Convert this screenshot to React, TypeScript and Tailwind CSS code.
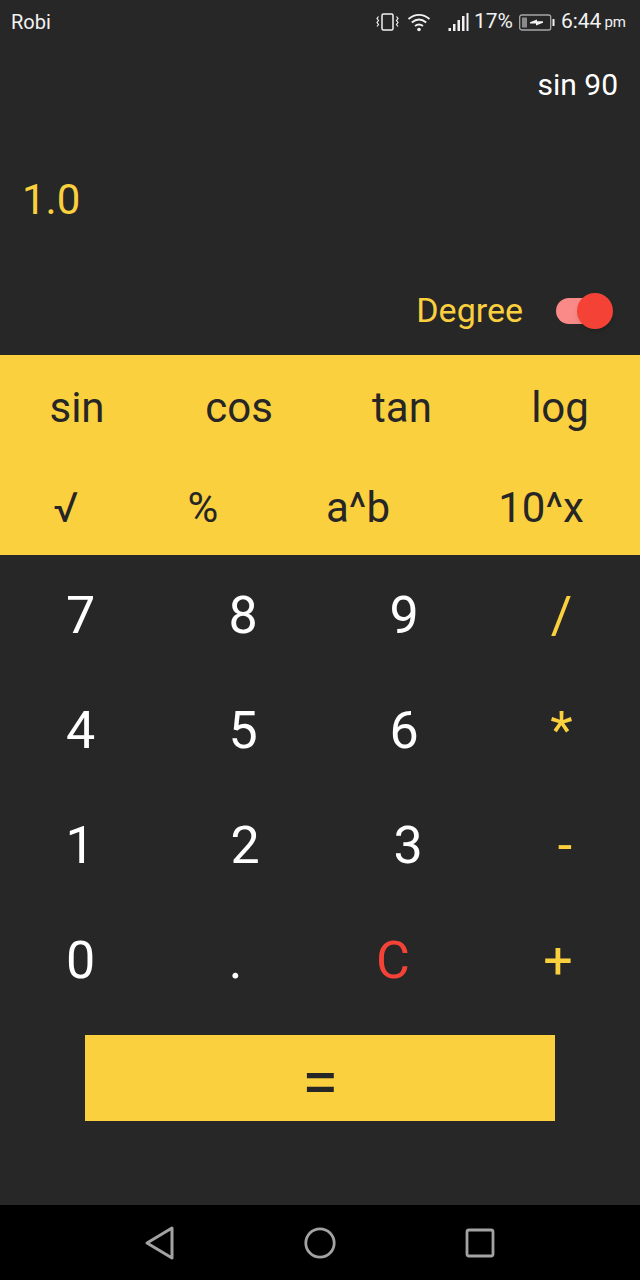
const font = { fontFamily: "Roboto, sans-serif" };

interface Cell {
  label: string;
  width: string;
  color?: string;
}

function Key({ label, width, color = "text-white" }: Cell) {
  return <button className={`${width} ${color} shrink-0 text-center text-[52px] leading-none`}>{label}</button>;
}

function StatusIcons() {
  return (
    <>
      <svg width="24" height="20" viewBox="0 0 24 20" fill="none" stroke="#f2f2f2" strokeWidth="1.5">
        <rect x="6" y="2" width="11" height="16" rx="1.5" />
        <path d="M2.5 4.5 1 6.5 2.5 8.5 1 10.5 2.5 12.5 1 14.5M20.5 4.5 22 6.5 20.5 8.5 22 10.5 20.5 12.5 22 14.5" strokeWidth="1.2" />
      </svg>
      <svg width="26" height="20" viewBox="0 0 26 20" fill="none" stroke="#f2f2f2" strokeWidth="1.8" className="ml-[6px]">
        <path d="M2.5 7C9 1.5 17 1.5 23.5 7M5.8 10.5C10.3 6.8 15.7 6.8 20.2 10.5M9 14c2.6-2 5.4-2 8 0" />
        <circle cx="13" cy="17.5" r="1.8" fill="#f2f2f2" stroke="none" />
      </svg>
      <svg width="22" height="20" viewBox="0 0 22 20" fill="#f2f2f2" className="ml-[16px]">
        <rect x="0.5" y="16" width="2.5" height="3" />
        <rect x="5" y="12" width="2.5" height="7" />
        <rect x="9.5" y="8" width="2.5" height="11" />
        <rect x="14" y="4" width="2.5" height="15" />
        <rect x="18.5" y="1" width="2" height="18" />
      </svg>
    </>
  );
}

function BatteryIcon() {
  return (
    <svg width="36" height="18" viewBox="0 0 36 18" fill="none" className="ml-[6px]">
      <rect x="0.7" y="2" width="31" height="15" rx="2" stroke="#a8a8a8" strokeWidth="1.3" />
      <rect x="3" y="4.5" width="5" height="10" fill="#8a8a8a" />
      <path d="M11 9.2 18 6.6V8.3H24V9.8L17 12.4V10.6H11Z" fill="#f2f2f2" />
      <rect x="33.5" y="6" width="2" height="7" rx="0.5" fill="#f2f2f2" />
    </svg>
  );
}

export default function App() {
  return (
    <div style={font} className="flex h-[1280px] w-[640px] flex-col overflow-hidden bg-[#272727]">
      {/* Status bar */}
      <div className="flex h-[44px] items-center pr-[14px] pl-[11px] text-[#f2f2f2]">
        <span className="text-[20px]">Robi</span>
        <div className="ml-auto flex items-center">
          <StatusIcons />
          <span className="ml-[4px] text-[21px]">17%</span>
          <BatteryIcon />
          <span className="ml-[6px] text-[21px]">6:44</span>
          <span className="ml-[3px] text-[15px]">pm</span>
        </div>
      </div>

      {/* Display */}
      <div className="flex h-[311px] flex-col">
        <div className="pt-[23px] pr-[22px] text-right text-[30px] leading-[36px] text-white">sin 90</div>
        <div className="mt-[73px] pl-[22px] text-[42px] leading-[48px] text-[#fbd03e]">1.0</div>
        <div className="mt-[67px] flex items-center justify-end pr-[32px]">
          <span className="mb-[2px] text-[34px] leading-[38px] text-[#fbd03e]">Degree</span>
          <div className="relative ml-[33px] h-[26px] w-[52px] rounded-full bg-[#f98a87]">
            <div className="absolute top-[-5px] right-[-5px] h-[36px] w-[36px] rounded-full bg-[#f44336] shadow-md" />
          </div>
        </div>
      </div>

      {/* Scientific keys */}
      <div className="flex h-[200px] flex-col bg-[#fbd03e] text-[#262626]">
        <div className="flex h-[104px] items-center text-center text-[42px]">
          <span className="w-[154px]">sin</span>
          <span className="w-[170px]">cos</span>
          <span className="w-[156px]">tan</span>
          <span className="w-[160px]">log</span>
        </div>
        <div className="flex h-[96px] items-center text-center text-[42px]">
          <span className="w-[132px]">√</span>
          <span className="w-[142px]">%</span>
          <span className="w-[168px]">a^b</span>
          <span className="w-[198px]">10^x</span>
        </div>
      </div>

      {/* Number keys */}
      <div className="flex flex-1 flex-col pt-[3px]">
        <div className="flex h-[115px] items-center">
          <Key label="7" width="w-[161px]" />
          <Key label="8" width="w-[164px]" />
          <Key label="9" width="w-[158px]" />
          <Key label="/" width="w-[157px]" color="text-[#fbd03e]" />
        </div>
        <div className="flex h-[115px] items-center">
          <Key label="4" width="w-[161px]" />
          <Key label="5" width="w-[164px]" />
          <Key label="6" width="w-[158px]" />
          <Key label="*" width="w-[157px]" color="text-[#fbd03e]" />
        </div>
        <div className="flex h-[115px] items-center">
          <Key label="1" width="w-[160px]" />
          <Key label="2" width="w-[170px]" />
          <Key label="3" width="w-[156px]" />
          <Key label="-" width="w-[158px]" color="text-[#fbd03e]" />
        </div>
        <div className="flex h-[115px] items-center">
          <Key label="0" width="w-[161px]" />
          <Key label="." width="w-[149px]" />
          <Key label="C" width="w-[166px]" color="text-[#f44336]" />
          <Key label="+" width="w-[164px]" color="text-[#fbd03e]" />
        </div>
        <button className="mx-auto mt-[17px] h-[86px] w-[470px] bg-[#fbd03e] pt-[10px] text-[66px] leading-none text-[#262626]">=</button>
      </div>

      {/* Nav bar */}
      <div className="flex h-[75px] items-center bg-black">
        <svg width="32" height="36" viewBox="0 0 32 36" fill="none" stroke="#a3a3a3" strokeWidth="3" strokeLinejoin="round" className="ml-[144px]">
          <path d="M28 3 3 18 28 33Z" />
        </svg>
        <svg width="32" height="32" viewBox="0 0 32 32" fill="none" stroke="#a3a3a3" strokeWidth="2.8" className="ml-[128px]">
          <circle cx="16" cy="16" r="14.2" />
        </svg>
        <svg width="30" height="30" viewBox="0 0 30 30" fill="none" stroke="#a3a3a3" strokeWidth="2.8" className="ml-[129px]">
          <rect x="2" y="2" width="26" height="26" rx="2" />
        </svg>
      </div>
    </div>
  );
}
